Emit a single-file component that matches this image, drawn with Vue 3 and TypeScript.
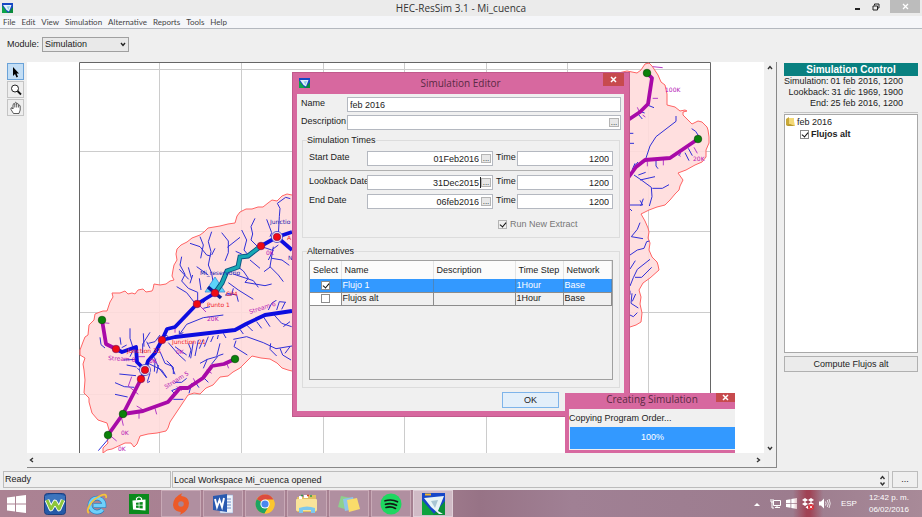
<script setup lang="ts">
import { ref } from 'vue'

interface Alternative {
  name: string
  selected: boolean
  step: string
  network: string
}
interface Label {
  x: number
  y: number
  text: string
  kind: string
  turn?: number
}

const menus = ['File', 'Edit', 'View', 'Simulation', 'Alternative', 'Reports', 'Tools', 'Help']
const moduleName = ref('Simulation')
const name = ref('feb 2016')
const description = ref('')
const times = ref([
  { label: 'Start Date', date: '01Feb2016', time: '1200' },
  { label: 'Lookback Date', date: '31Dec2015', time: '1200' },
  { label: 'End Date', date: '06feb2016', time: '1200' },
])
const alternatives = ref<Alternative[]>([
  { name: 'Flujo 1', selected: true, step: '1Hour', network: 'Base' },
  { name: 'Flujos alt', selected: false, step: '1Hour', network: 'Base' },
])
const treeChecked = ref(true)

const gridX = [159, 241, 323, 404, 486, 567, 648]
const gridY = [69, 151, 231, 312, 394]

const basin =
  'M292 195L287 194L282 196L277 201L272 200L268 203L263 207L258 207L252 209L246 209L240 212L237 216L235 223L228 224L220 226L208 228L204 232L200 235L192 238L187 242L181 245L177 249L176 254L177 260L174 265L173 270L172 276L174 280L170 281L166 284L160 285L154 284L153 289L152 291L146 292L143 289L138 290L135 294L132 293L128 294L125 291L120 293L112 293L113 297L110 302L107 311L103 311L100 312L95 314L94 320L89 325L88 335L85 337L83 342L80 350L80 355L85 358L83 364L84 370L85 380L84 393L89 398L89 402L92 413L98 420L107 423L110 433L107 438L108 443L103 448L103 453L107 450L112 449L125 443L131 443L134 447L137 444L140 436L148 434L157 433L166 431L168 428L170 422L176 413L188 395L194 393L200 394L206 388L213 385L220 377L228 376L233 372L240 368L252 356L261 358L270 359L277 363L282 368L288 370L292 371L400 395L560 380L630 327L636 325L641 322L642 313L640 304L641 297L639 290L643 283L650 278L659 270L658 265L657 262L652 257L649 250L650 243L648 238L649 232L648 228L645 221L641 214L649 210L657 207L665 205L670 200L675 194L679 190L680 186L683 180L678 173L686 170L695 165L702 162L706 157L706 150L709 143L709 137L708 130L707 127L702 122L698 121L692 124L687 119L683 115L683 112L687 111L685 110L680 111L675 107L667 105L667 94L665 85L661 82L658 75L652 66L649 63L645 64L641 70L637 73L627 71L500 100L400 180Z'

const mainRivers = [
  'M292 232L277 237L261 246',
  'M277 237L292 250',
  'M215 293L197 304L175 327L167 329L162 340L155 353L148 361L145 370L141 379',
  'M162 340L175 337L235 330L246 324L265 315L292 311',
  'M116 349L122 352L136 347L137 362L145 370',
]
const greatRivers = [
  'M102 320L106 344L116 349',
  'M141 379L123 414L108 435',
  'M123 414L143 411L168 402L180 388L188 388L203 378L212 366L224 364L235 359',
  'M647 73L652 78L648 104L640 112L628 120',
  'M698 139L670 158L645 160L636 167L628 178',
]
const reservoir = 'M261 246L248 256L240 257L238 267L227 271L222 283L215 293'

const upperStreams =
  'M455 155l-10 30 8 30-8 40 10 25 5 30M485 158l20 25 0 35-10 25M540 172l-38 30M390 190l30 10 20 25 12 3M420 170l10 25-8 40M545 150l15 30-8 30 10 12M585 115l-12 25 5 22-5 18 20 20M620 118l15 40-5 12M655 165l3-55 2-25-8-15 25-18 14 4M365 230l-5 25 15 28-10 20 20 22 28 12 0 30M385 262l10 35M358 268l28 30M350 320l30 18 22 28M410 260l35 25M530 258l20 15 15 22-10 12 60 10 20-5M570 240l30 25M505 308l30 22 45 28M520 325l-5 20-20 0M640 200l-10 60 25 25 15 20M636 235l30 5 22 16M632 260l-20 15M605 200l30 10 20-15M520 282l60 20 15 20M418 295l5 35M398 285l-8 25M640 210l-15 30M545 222l-18-8M465 205l-10 20M500 340l30 5 5 20M428 370l12-12M430 385l20-5'
const lowerStreams =
  'M490 45l-60 8-50 20-20 28M358 92l0 10 12-4M120 112l3 22 12 10M210 85l0 30 8 25M180 112l3 22M250 100l2 40M270 97l-22 35 0 28M178 222l50 5M165 248l28 12 30 2M165 283l38 8M115 452l30-35M265 190l40 20 15 22M283 172l12 30 25 32M300 155l15 35 20 8 10 25M325 128l30 35 22 20M345 140l35 25M385 130l8 20-6 22M400 125l-8 50M415 120l-10 48M430 118l-12 28M445 110l-12 30M460 108l-8 18M475 105l-3 12M490 100l8 14M520 118l40-8 50 18 38 18 48-8M528 122l-6 18 40 25M420 190l22-12 28-8 10-40M430 205l12-28M455 192l20-25 15-5M540 88l10 14M560 75l18 18M590 65l15 20M610 50l20 30M640 42l25 28 30 10M625 30l10-20 15-10M650 30l8-25 20 2M665 28l10-20M632 130l-2 18 20 20M660 145l8 20 25 15M690 140l-15 20M690 65l-20 15M380 235l-15 12-20 0M395 250l-8 30M405 245l12 18M430 232l15 15M340 298h30M360 262l-25 10 10 10M200 135l-15 8M220 150l-10 20M190 180l40-2M200 195l30 6M232 205l15 12M262 245l8-25M262 248l8-4M265 130l20-5 15-20M270 145l-10-20M310 100l15 10M320 182l20 20 0 20M285 185l-2 30M295 195l-5 25'
const eastStreams =
  'M168 168v16l-60 46-18 28-12 36M215 206l12 8 10 16M108 303v15l6 8M195 278l12 24M205 265l12 22M182 280l-6 8M42 345l22 15 30 22 2 28-8 28M60 360l45-10M97 385h30l20-11M55 345l22-8M30 435h38l-8-14M62 438l8-22M28 445l8 8M30 220h10M30 250h12M82 135l20 8M55 163l12 14M62 155l12 4M45 310l-8 18M44 318l10-12M60 488l-8 20-18 22 35 6M30 585l22-15 20-5 8-20 8-2M30 627l16-25M90 598l-38 30-12 25-10 25M45 652h20l30-30M30 692v12M36 700l-3 30 22 14M47 702l-10 22M30 765l10 5 12-12'
const sideGauges =
  'M98 20l30 3M98 115h16M60 160l-8-18M68 165l8 6M82 305v14M130 300v16M175 280l6 10M222 262l10 18'
const leftGauges =
  'M128 68l20 2M215 230l-10 28 30 25M237 338v18M285 325l5 18M185 355l5 22M152 408l18 15M350 260l15 12M400 235l10 20M345 80v18M420 18l18 18M250 330l-20-12M270 170l20 20M440 210l15 10M500 190l6 15M235 170h20'

const labels: Label[] = [
  { x: 270, y: 224, text: 'Junctio', kind: 'navy' },
  { x: 200, y: 275, text: 'Mi_reservorio', kind: 'navy' },
  { x: 226, y: 296, text: 'CP4', kind: 'red' },
  { x: 207, y: 307, text: 'Punto 1', kind: 'red' },
  { x: 207, y: 321, text: '20K', kind: 'violet' },
  { x: 172, y: 344, text: 'Junction 21', kind: 'red' },
  { x: 176, y: 354, text: '0K', kind: 'violet' },
  { x: 127, y: 353, text: 'Junction 33', kind: 'red' },
  { x: 108, y: 360, text: 'Stream 8', kind: 'violet', turn: 4 },
  { x: 250, y: 314, text: 'Stream 6', kind: 'violet', turn: -18 },
  { x: 166, y: 389, text: 'Stream 5', kind: 'violet', turn: -32 },
  { x: 121, y: 435, text: '0K', kind: 'violet' },
  { x: 118, y: 451, text: '0K', kind: 'violet' },
  { x: 149, y: 363, text: '0K', kind: 'violet' },
  { x: 266, y: 255, text: '0K', kind: 'violet' },
  { x: 287, y: 240, text: 'A', kind: 'red' },
  { x: 288, y: 260, text: 'N', kind: 'navy' },
  { x: 665, y: 92, text: '100K', kind: 'violet' },
  { x: 693, y: 161, text: '20K', kind: 'violet' },
]
const greenNodes = [[102, 320], [235, 359], [123, 414], [108, 435], [647, 73], [698, 139]]
const redNodes = [[277, 237], [261, 246], [215, 293], [197, 304], [162, 340], [116, 349], [145, 370], [141, 379]]
const rings = [[277, 237], [145, 370]]
</script>

<template>
  <div class="app">
    <header class="titlebar">
      <svg class="logo" viewBox="0 0 22 20"><rect width="22" height="20" fill="#1447c4" /><path d="M0 5L12 20H0z" fill="#0da54a" /><path d="M12 20L22 8v12z" fill="#0a8a3c" /><path d="M2 4h17l-5 13-5-3z" fill="#e4f3f7" /><path d="M9 7l7-1-3 8z" fill="#8fd0e8" /></svg>
      <h1>HEC-ResSim 3.1 - Mi_cuenca</h1>
      <div class="window-buttons">
        <button aria-label="Minimize"><svg width="8" height="8" viewBox="0 0 8 8"><path d="M1 6h5" stroke="#222" stroke-width="2" /></svg></button>
        <button aria-label="Restore"><svg width="8" height="8" viewBox="0 0 8 8"><path d="M2.500 2.500v-1.500h4.500v4h-1.500M1 3h4.500v4H1z" fill="none" stroke="#222" stroke-width="1" /></svg></button>
        <button class="grey-close" aria-label="Close"><svg width="7" height="7" viewBox="0 0 7 7"><path d="M1 1l5 5M6 1L1 6" stroke="#fff" stroke-width="1.300" /></svg></button>
      </div>
    </header>

    <nav class="menubar">
      <button v-for="m in menus" :key="m">{{ m }}</button>
    </nav>

    <div class="toolbar">
      <label for="module">Module:</label>
      <span class="select-wrap">
        <select id="module" v-model="moduleName"><option>Simulation</option></select>
        <svg width="6" height="5" viewBox="0 0 6 5"><path d="M1 1l2 2.500L5 1" fill="none" stroke="#222" stroke-width="1.400" /></svg>
      </span>
    </div>

    <main class="work">
      <aside class="tools">
        <button class="active" aria-label="Select"><svg width="14" height="14" viewBox="0 0 14 14"><path d="M4 2v9l2-2 1.500 3.500 1.500-.7L7.600 8.500H10z" fill="#000" /></svg></button>
        <button aria-label="Zoom"><svg width="14" height="14" viewBox="0 0 14 14"><circle cx="6" cy="5.500" r="3.500" fill="#fff" stroke="#222" stroke-width="1" /><path d="M8.500 8L12 11.500" stroke="#111" stroke-width="1.800" /></svg></button>
        <button aria-label="Pan"><svg width="14" height="14" viewBox="0 0 14 14"><path d="M4.500 12.500L2 8.500V7l1.200-.2L4 8V3.500l1-.8.8.8V2l1-.8.9.8v1.200l1-.7.9.8v1.200l1-.3.6.8v4L10 12.500zM5.800 3.500V6.500M7.700 3V6.500M9.600 4.500v2" fill="#fff" stroke="#333" stroke-width=".8" /></svg></button>
      </aside>

      <section class="map-pane">
        <svg class="map" viewBox="27 62 737 392" preserveAspectRatio="xMinYMin slice">
          <path d="M79.500 460V62.500H710.500V460" fill="#fff" stroke="#666" />
          <g stroke="#ccc">
            <path v-for="x in gridX" :key="x" :d="`M${x}.5 63V460`" />
            <path v-for="y in gridY" :key="y" :d="`M80 ${y}.5H710`" />
          </g>
          <path :d="basin" fill="#ffdcdc" fill-opacity=".9" stroke="#ff6464" stroke-width="1" />
          <g class="streams">
            <svg x="60" y="180" width="240" height="140" viewBox="0 0 720 420"><path :d="upperStreams" /></svg>
            <svg x="60" y="300" width="240" height="160" viewBox="0 0 720 480">
              <path :d="lowerStreams" />
              <path :d="leftGauges" class="gauge" />
            </svg>
            <svg x="620" y="60" width="100" height="280" viewBox="0 0 300 840">
              <path :d="eastStreams" />
              <path :d="sideGauges" class="gauge" />
            </svg>
          </g>
          <g fill="none" stroke-width="3.800" stroke-linejoin="round">
            <path v-for="d in greatRivers" :key="d" :d="d" stroke="#a80aa8" />
            <path v-for="d in mainRivers" :key="d" :d="d" stroke="#0d0de0" />
          </g>
          <path d="M215 277L205 292H225z" fill="#5cd4fa" stroke="#3a8ad8" stroke-width=".8" />
          <path d="M208 287L221 298" stroke="#0a1a9a" stroke-width="3.600" />
          <path :d="reservoir" fill="none" stroke="#0a5080" stroke-width="5" />
          <path :d="reservoir" fill="none" stroke="#18a8b4" stroke-width="3.200" />
          <text
            v-for="(l, i) in labels"
            :key="i"
            :x="l.x"
            :y="l.y"
            :class="l.kind"
            :transform="l.turn ? `rotate(${l.turn} ${l.x} ${l.y})` : undefined"
          >{{ l.text }}</text>
          <circle v-for="n in rings" :key="'r' + n[0]" :cx="n[0]" :cy="n[1]" r="5.500" fill="#fff" stroke="#3030c0" stroke-width=".8" />
          <circle v-for="n in redNodes" :key="'d' + n[0]" :cx="n[0]" :cy="n[1]" r="3.800" fill="#f00a14" stroke="#6a1060" stroke-width=".6" />
          <circle v-for="n in greenNodes" :key="'g' + n[0]" :cx="n[0]" :cy="n[1]" r="3.800" fill="#0a820a" stroke="#064006" stroke-width=".6" />
        </svg>
        <div class="vscroll">
          <button aria-label="Scroll up"><svg width="6" height="5" viewBox="0 0 6 5"><path d="M1 4l2-2.500L5 4" /></svg></button>
          <button aria-label="Scroll down"><svg width="6" height="5" viewBox="0 0 6 5"><path d="M1 1l2 2.500L5 1" /></svg></button>
        </div>
        <div class="hscroll">
          <button aria-label="Scroll left"><svg width="5" height="6" viewBox="0 0 5 6"><path d="M4 1L1.500 3 4 5" /></svg></button>
          <button aria-label="Scroll right"><svg width="5" height="6" viewBox="0 0 5 6"><path d="M1 1l2.500 2L1 5" /></svg></button>
        </div>
      </section>

      <aside class="control">
        <h2>Simulation Control</h2>
        <dl>
          <div><dt>Simulation:</dt><dd>01 feb 2016, 1200</dd></div>
          <div><dt>Lookback:</dt><dd>31 dic 1969, 1900</dd></div>
          <div><dt>End:</dt><dd>25 feb 2016, 1200</dd></div>
        </dl>
        <div class="tree">
          <div class="tree-root">
            <svg width="9" height="10" viewBox="0 0 9 10"><path d="M0 2l3-2v9l-3-1z" fill="#c9a93a" /><path d="M3 1h5v3l1 5H3z" fill="#f3d977" /><path d="M0 8l4-1 5 2H2z" fill="#b9982c" /></svg>
            feb 2016
          </div>
          <label class="tree-leaf"><input v-model="treeChecked" type="checkbox" class="tick" />Flujos alt</label>
        </div>
        <button class="compute">Compute Flujos alt</button>
      </aside>
    </main>

    <footer class="status">
      <div class="ready">Ready</div>
      <div class="message">
        Local Workspace Mi_cuenca opened
        <svg width="7" height="13" viewBox="0 0 7 13"><path d="M1.500 5l2-2.500 2 2.500M1.500 8.500l2 2.500 2-2.500" /></svg>
      </div>
      <button>...</button>
    </footer>

    <div class="taskbar">
      <button class="start" aria-label="Start"><svg width="19" height="18" viewBox="0 0 19 18"><path d="M0 2.500L8 1.500V8.500H0zM9 1.300L19 0V8.500H9zM0 9.500H8V16.500L0 15.500zM9 9.500H19V18L9 16.700z" fill="#fff" /></svg></button>
      <button aria-label="WinHTTrack"><svg width="22" height="22" viewBox="0 0 22 22"><rect x=".5" y=".5" width="21" height="21" rx="3" fill="#245aa8" stroke="#1b3f80" /><path d="M1 3q10-4 20 0v6q-10 4-20 0z" fill="#4c86cc" opacity=".6" /><path d="M3 7l4 9 4-7 4 7 4-9" fill="none" stroke="#fff" stroke-width="4.600" stroke-linejoin="round" /><path d="M3 7l4 9 4-7 4 7 4-9" fill="none" stroke="#8cc63c" stroke-width="3" stroke-linejoin="round" /></svg></button>
      <button aria-label="Internet Explorer"><svg width="22" height="22" viewBox="0 0 22 22"><path d="M7.500 12.500H18A7 7 0 1 0 16.500 16.500" fill="none" stroke="#1d7fc4" stroke-width="4.600" /><path d="M7.500 12.500H18A7 7 0 1 0 16.500 16.500" fill="none" stroke="#6fd0fa" stroke-width="3.400" /><path d="M3 20c-4-2 2-13 11-17 4-2 7-2 6 2" fill="none" stroke="#f5c33a" stroke-width="1.800" /></svg></button>
      <button aria-label="Store"><svg width="20" height="20" viewBox="0 0 20 20"><rect width="20" height="20" fill="#0a8a1c" /><path d="M3.500 6.500L16.500 5.500V16.500L4 15.500z" fill="#fff" /><path d="M7.500 6.500V4.500q2.500-3 5 0v2" fill="none" stroke="#fff" stroke-width="1.200" /><path d="M7 8.700l2.700-.3v2.400H7zM10.400 8.300l3.300-.4v2.900h-3.300zM7 11.500h2.700v2.600L7 13.800zM10.400 11.500h3.300v3l-3.300-.3z" fill="#0a8a1c" /></svg></button>
      <button class="open" aria-label="Origin"><svg width="18" height="22" viewBox="0 0 18 22"><path d="M10.500 0Q9 1.500 9.300 3Q16.500 3.500 17 10Q17 18 7.500 22Q9 20.500 8.700 19Q1.500 18.500 1 12Q1 4 10.500 0z" fill="#ed5a28" /><circle cx="9" cy="11" r="2.800" fill="#a88494" /></svg></button>
      <button class="open" aria-label="Word"><svg width="20" height="20" viewBox="0 0 20 20"><rect x="7" y="1" width="13" height="18" fill="#eef3fb" stroke="#8aa8d8" stroke-width=".6" /><path d="M13 5h5M13 8h5M13 11h5M12 14h6" stroke="#6a8cc8" /><path d="M0 2l14-2v18L0 16z" fill="#2a5ab0" /><path d="M2 5l2 8 2.500-7L9 13l2-9" fill="none" stroke="#fff" stroke-width="1.900" /></svg></button>
      <button class="open" aria-label="Chrome"><svg width="20" height="20" viewBox="0 0 20 20"><circle cx="10" cy="10" r="9.500" fill="#fbc62f" /><path d="M10 10L1.800 5.200A9.500 9.500 0 0 1 18.500 5.500H10z" fill="#dd4b3e" /><path d="M10 10L1.800 5.200A9.500 9.500 0 0 0 9.500 19.500L14 12z" fill="#1ea362" /><path d="M10 10L18.500 5.500A9.500 9.500 0 0 1 9.500 19.500L13.500 13z" fill="#fbc62f" /><circle cx="10" cy="10" r="4.600" fill="#fff" /><circle cx="10" cy="10" r="3.600" fill="#4a87ee" /></svg></button>
      <button class="open" aria-label="File Explorer"><svg width="22" height="20" viewBox="0 0 22 20"><path d="M1 3h7l2-2h10v17H1z" fill="#e2c063" /><path d="M3 2h3v3H3zM8 1h4v3H8z" fill="#fff" /><path d="M5 1.500h2M14 2h2" stroke="#2a9a4a" stroke-width="1.500" /><path d="M11 1.500h2" stroke="#d8402a" stroke-width="1.500" /><rect y="5" width="21" height="12" rx="1" fill="#f9e39a" /><path d="M3 19v-5q8-3 16 0v5h-4v-3H7v3z" fill="#7cc8ee" /></svg></button>
      <button class="open" aria-label="Sticky Notes"><svg width="22" height="18" viewBox="0 0 22 18"><path d="M3 1l10 2-3 12L0 12z" fill="#8ed08c" /><path d="M5 4l10-2 2 12-10 2z" fill="#8fc4e8" /><path d="M9 5l10-2 3 11-11 3z" fill="#f9dc6a" /></svg></button>
      <button class="open" aria-label="Spotify"><svg width="22" height="22" viewBox="0 0 22 22"><circle cx="11" cy="11" r="10.500" fill="#1ed760" /><path d="M5 7.800q7-2 12.500 1M5.500 11.300q6-1.800 11 1M6 14.500q5-1.500 9.500.9" fill="none" stroke="#101c14" stroke-width="1.700" stroke-linecap="round" /></svg></button>
      <button class="open current" aria-label="HEC-ResSim"><svg width="23" height="22" viewBox="0 0 23 22"><rect width="23" height="22" fill="#1746c8" /><path d="M0 7L13 22H0z" fill="#0da23e" /><path d="M11 22L23 8v14z" fill="#0a8f38" /><path d="M2 5L22 3 16 18l5 3h-4l-8-7z" fill="#e9f4f6" /><path d="M9 8l7-1-3 8z" fill="#a9c5d2" /><path d="M3 1.500h6" stroke="#f4b52a" stroke-width="2" /></svg></button>

      <div class="tray">
        <svg width="6" height="4" viewBox="0 0 6 4"><path d="M0 4l3-3 3 3z" fill="#fff" /></svg>
        <svg width="11" height="11" viewBox="0 0 11 11"><path d="M3.500 2.500h7v5h-7zM5 9.500h5M7 7.500v2M1 1v3h2V1M2 4v6h2" fill="none" stroke="#fff" /></svg>
        <svg width="11" height="11" viewBox="0 0 11 11"><path d="M0 2l4.500-.8V5H0zM5.300 1L11 0v5H5.300zM0 5.800h4.500v4L0 9zM5.300 5.800H11V11l-5.700-1z" fill="#fff" /></svg>
        <span class="dropbox">
          <svg width="12" height="12" viewBox="0 0 12 12"><path d="M3 0l3 2-3 2-3-2zM9 0l3 2-3 2-3-2zM3 4l3 2-3 2-3-2zM9 4l3 2-3 2-3-2zM6 7.500l2.500 1.700L6 11 3.500 9.200z" fill="#fff" /><circle cx="9" cy="9" r="3" fill="#d8303a" /><path d="M7.800 7.800l2.400 2.400M10.200 7.800L7.800 10.200" stroke="#fff" stroke-width=".8" /></svg>
        </span>
        <svg width="12" height="11" viewBox="0 0 12 11"><path d="M0 3.500h2L5 .5v10l-3-3H0z" fill="#fff" /><path d="M6.500 3.500q1.200 2 0 4M8.300 2q2 3.500 0 7M10 1q2.500 4.500 0 9" fill="none" stroke="#fff" stroke-width=".8" /></svg>
        <span class="lang">ESP</span>
        <span class="clock">12:42 p. m.<br />06/02/2016</span>
      </div>
    </div>

    <section class="dialog editor" role="dialog" aria-label="Simulation Editor">
      <header>
        <svg class="logo" viewBox="0 0 22 20"><rect width="22" height="20" fill="#1447c4" /><path d="M0 5L12 20H0z" fill="#0da54a" /><path d="M12 20L22 8v12z" fill="#0a8a3c" /><path d="M2 4h17l-5 13-5-3z" fill="#e4f3f7" /><path d="M9 7l7-1-3 8z" fill="#8fd0e8" /></svg>
        <h2>Simulation Editor</h2>
        <button class="close" aria-label="Close"><svg width="7" height="7" viewBox="0 0 7 7"><path d="M1 1l5 5M6 1L1 6" stroke="#fff" stroke-width="1.500" /></svg></button>
      </header>
      <form class="client" @submit.prevent>
        <div class="field"><label for="name">Name</label><input id="name" v-model="name" /></div>
        <div class="field">
          <label for="desc">Description</label>
          <span class="with-button"><input id="desc" v-model="description" /><button type="button">...</button></span>
        </div>
        <fieldset class="times">
          <legend>Simulation Times</legend>
          <div v-for="(t, i) in times" :key="t.label" class="time-row" :class="{ first: i === 0 }">
            <label :for="'date' + i">{{ t.label }}</label>
            <span class="with-button"><input :id="'date' + i" v-model="t.date" /><i v-if="i === 1" class="caret" /><button type="button">...</button></span>
            <label :for="'time' + i">Time</label>
            <input :id="'time' + i" v-model="t.time" class="clock-input" />
          </div>
          <label class="extract"><input type="checkbox" class="tick" checked disabled />Run New Extract</label>
        </fieldset>
        <fieldset class="alts">
          <legend>Alternatives</legend>
          <div class="table-box">
            <table>
              <colgroup><col class="c1" /><col class="c2" /><col class="c3" /><col class="c4" /><col class="c5" /></colgroup>
              <thead><tr><th>Select</th><th>Name</th><th>Description</th><th>Time Step</th><th>Network</th></tr></thead>
              <tbody>
                <tr v-for="(a, i) in alternatives" :key="a.name" :class="{ chosen: i === 0 }">
                  <td><input v-model="a.selected" type="checkbox" class="tick" :aria-label="a.name" /></td>
                  <td>{{ a.name }}</td><td></td><td>{{ a.step }}</td><td>{{ a.network }}</td>
                </tr>
              </tbody>
            </table>
          </div>
        </fieldset>
        <div class="actions"><button class="ok">OK</button></div>
      </form>
    </section>

    <section class="dialog progress" role="dialog" aria-label="Creating Simulation">
      <header>
        <h2>Creating Simulation</h2>
        <button class="close" aria-label="Close"><svg width="7" height="7" viewBox="0 0 7 7"><path d="M1 1l5 5M6 1L1 6" stroke="#fff" stroke-width="1.500" /></svg></button>
      </header>
      <div class="client">
        <p>Copying Program Order...</p>
        <div class="bar" role="progressbar" aria-valuenow="100">100%</div>
      </div>
    </section>
  </div>
</template>

<style>
body {
  margin: 0;
}
</style>

<style scoped>
* {
  box-sizing: border-box;
}
.app {
  position: relative;
  display: flex;
  flex-direction: column;
  height: 100vh;
  overflow: hidden;
  background: #efefef;
  color: #222;
  font: 9px/11px "Liberation Sans", Arial, sans-serif;
}
button,
input,
select {
  margin: 0;
  padding: 0;
  border: 0;
  border-radius: 0;
  background: none;
  color: inherit;
  font: inherit;
}
button {
  display: flex;
  align-items: center;
  justify-content: center;
}
h1,
h2,
p,
dl,
dd {
  margin: 0;
  font-weight: normal;
}
svg {
  display: block;
  flex: none;
}
.titlebar {
  display: grid;
  grid-template-columns: 1fr auto 1fr;
  align-items: center;
  height: 16px;
  background: #ebebeb;
}
.logo {
  width: 11px;
  height: 10px;
  margin-left: 2px;
}
h1 {
  font: 10px/16px "Open Sans", sans-serif;
  color: #333;
}
.window-buttons {
  display: flex;
  justify-content: flex-end;
  align-self: start;
  gap: 10px;
  padding-right: 2px;
}
.window-buttons button {
  height: 13px;
}
.window-buttons .grey-close {
  width: 30px;
  background: #bcbcbc;
}
.menubar {
  display: flex;
  gap: 6px;
  height: 13px;
  padding-left: 3px;
  border-bottom: 1px solid #b4b8bf;
  background: #f5f6f9;
  color: #444;
  font: 8px/12px Lato, sans-serif;
}
.toolbar {
  display: flex;
  align-items: center;
  gap: 3px;
  height: 31px;
  padding-left: 7px;
}
.select-wrap {
  position: relative;
  display: flex;
}
.select-wrap select {
  width: 87px;
  height: 15px;
  padding-left: 2px;
  border: 1px solid #a0a0a0;
  background: #e9e9e9;
  appearance: none;
}
.select-wrap svg {
  position: absolute;
  right: 3px;
  top: 5px;
}
.work {
  display: flex;
  flex: 1;
  min-height: 0;
}
.tools {
  display: flex;
  flex-direction: column;
  align-items: flex-end;
  gap: 1px;
  width: 27px;
  padding: 3px 3px 0 0;
}
.tools button {
  width: 17px;
  height: 17px;
  border: 1px solid #c4c4c4;
  background: #eee;
}
.tools .active {
  border-color: #6aa2d8;
  background: #c3def5;
}
.map-pane {
  display: grid;
  flex: 1;
  grid-template: minmax(0, 1fr) 14px / minmax(0, 1fr) 12px;
  margin-top: 2px;
  border-right: 1px solid #888;
  border-bottom: 1px solid #888;
}
.map {
  width: 100%;
  height: 100%;
  background: #fff;
}
.map text {
  font: 6px "DejaVu Sans", sans-serif;
}
.navy {
  fill: #2020b0;
}
.red {
  fill: #f01e28;
}
.violet {
  fill: #b414b4;
}
.streams path {
  fill: none;
  stroke: #3030d8;
  stroke-width: 3px;
}
.streams .gauge {
  stroke: #b43cc8;
}
.vscroll,
.hscroll {
  display: flex;
  justify-content: space-between;
  background: #f0f0f0;
}
.vscroll {
  flex-direction: column;
  align-items: center;
  padding: 3px 0 2px;
}
.hscroll {
  padding: 0 3px 0 2px;
}
.vscroll path,
.hscroll path,
.message path {
  fill: none;
  stroke: #333;
  stroke-width: 1.4px;
}
.control {
  display: flex;
  flex-direction: column;
  width: 145px;
  padding: 3px 4px 0 7px;
}
.control h2 {
  background: #088080;
  color: #fff;
  font-weight: bold;
  font-size: 10px;
  line-height: 13px;
  text-align: center;
}
.control dl {
  display: grid;
  padding: 0 18px 3px 0;
  border-bottom: 1px solid #c4c4c4;
}
.control dl div {
  display: flex;
  justify-content: flex-end;
  gap: 2px;
  white-space: nowrap;
}
.tree {
  height: 239px;
  margin-top: 1px;
  padding: 1px;
  border: 1px solid #a8a8a8;
  background: #fff;
}
.tree-root,
.tree-leaf {
  display: flex;
  align-items: center;
  gap: 2px;
  height: 12px;
}
.tree-leaf {
  padding-left: 14px;
  font-weight: bold;
}
.compute {
  height: 16px;
  margin-top: 3px;
  border: 1px solid #b0b0b0;
  background: #ebebeb;
}
.tick {
  position: relative;
  flex: none;
  width: 9px;
  height: 9px;
  border: 1px solid #8c8c8c;
  background: #fff;
  appearance: none;
}
.tick:checked::after {
  position: absolute;
  left: 2px;
  top: 0;
  width: 3px;
  height: 5px;
  border: solid #111;
  border-width: 0 1px 1px 0;
  transform: rotate(40deg);
  content: "";
}
.tick:disabled {
  border-color: #b4b4b4;
  background: #f0f0f0;
}
.status {
  display: flex;
  gap: 1px;
  height: 22px;
  padding: 3px 4px 2px 3px;
}
.status > * {
  border: 1px solid #bcbcbc;
}
.ready {
  width: 168px;
  padding: 2px 1px;
}
.message {
  display: flex;
  flex: 1;
  align-items: center;
  justify-content: space-between;
  padding: 2px 2px 0 1px;
}
.status button {
  width: 26px;
  margin-left: 2px;
}
.taskbar {
  display: flex;
  align-items: stretch;
  gap: 2px;
  height: 27px;
  background: linear-gradient(90deg, #ab8293 0, #a58091 45%, #977386 52%, #a08094 62%, #9c7c8e 86%, #a88a98 100%);
  color: #fff;
}
.taskbar button {
  width: 40px;
}
.taskbar .start {
  width: 33px;
}
.taskbar .open {
  border: 1px solid #c8a9b6;
  background: #b08fa0;
}
.taskbar .current {
  background: #d0bbc6;
  border-color: #e0d0d8;
}
.tray {
  display: flex;
  flex: 1;
  align-items: center;
  justify-content: flex-end;
  gap: 5px;
  padding-right: 13px;
  font: 8px/12px "Liberation Sans", sans-serif;
}
.tray > svg:first-child {
  margin-right: 5px;
}
.dropbox {
  display: flex;
  align-items: center;
  align-self: stretch;
  margin: 0 -9px;
  padding: 0 9px;
  background: linear-gradient(90deg, transparent, #a04254 45%, #a04254 55%, transparent);
}
.lang {
  margin: 0 7px 0 5px;
}
.clock {
  text-align: center;
}
.dialog {
  position: absolute;
  background: #d7689f;
}
.dialog header {
  display: grid;
  grid-template-columns: 1fr auto 1fr;
  align-items: center;
}
.dialog h2 {
  font: 10px/14px "Open Sans", sans-serif;
  color: #5a2a44;
}
.close {
  align-self: start;
  justify-self: end;
  background: #c74a4e;
}
.dialog .client {
  background: #f0f0f0;
}
.editor {
  left: 292px;
  top: 72px;
  width: 338px;
  padding: 0 6px 6px 5px;
  box-shadow: inset 0 0 0 1px #c05a8c;
}
.editor header {
  height: 22px;
}
.editor .close {
  width: 21px;
  height: 13px;
  margin-top: 1px;
}
.editor .client {
  display: flex;
  flex-direction: column;
  padding: 3px 3px 3px 4px;
}
.editor input:not(.tick) {
  width: 100%;
  height: 15px;
  padding: 1px 2px 0;
  border: 1px solid #b4b8c0;
  background: #fff;
}
.field {
  display: grid;
  grid-template-columns: 46px 1fr;
  height: 18px;
}
.field label,
.time-row label {
  padding-top: 1px;
  white-space: nowrap;
}
.with-button {
  position: relative;
  display: block;
}
.with-button button {
  position: absolute;
  right: 2px;
  top: 3px;
  width: 10px;
  height: 9px;
  border: 1px solid #b4b4b4;
  background: #e8e8e8;
  font-size: 8px;
  line-height: 5px;
}
fieldset {
  min-width: 0;
  margin: 0 1px;
  padding: 0 6px;
  border: 1px solid #dcdcdc;
}
legend {
  padding: 0;
  margin-left: -2px;
}
.times {
  height: 103px;
  margin-top: 2px;
  padding-top: 5px;
}
.time-row {
  display: grid;
  grid-template-columns: 58px 126px 1fr 96px;
  height: 19px;
}
.time-row.first {
  height: 20px;
  margin-bottom: 4px;
  border-bottom: 1px solid #b0b0b0;
}
.time-row > label:nth-of-type(2) {
  padding-left: 3px;
}
.time-row input:not(.tick) {
  text-align: right;
}
.time-row .with-button input:not(.tick) {
  padding-right: 13px;
}
.time-row .clock-input:not(.tick) {
  padding-right: 3px;
}
.caret {
  position: absolute;
  right: 12px;
  top: 2px;
  width: 1px;
  height: 11px;
  background: #222;
}
.extract {
  display: flex;
  align-items: center;
  gap: 3px;
  height: 14px;
  margin-top: 4px;
  padding-left: 189px;
  color: #777;
}
.alts {
  height: 142px;
  margin-top: 8px;
}
.table-box {
  height: 120px;
  margin-top: 3px;
  border: 1px solid #a0a0a0;
}
table {
  width: 100%;
  border-collapse: collapse;
  table-layout: fixed;
}
.c1 {
  width: 31px;
}
.c2 {
  width: 92px;
}
.c3 {
  width: 82px;
}
.c4 {
  width: 48px;
}
th {
  height: 18px;
  padding: 0 3px;
  border-right: 1px solid #e4e4e4;
  background: #fbfbfb;
  font-weight: normal;
  text-align: left;
  white-space: nowrap;
}
td {
  height: 13px;
  padding: 0 1px;
  border-right: 1px solid #8c8c8c;
  border-bottom: 1px solid #8c8c8c;
}
td:first-child {
  background: #fff;
  line-height: 0;
  text-align: center;
}
.chosen td,
.chosen td:first-child {
  border-right-color: #4a86c0;
  background: #3399ff;
  color: #fff;
}
.actions {
  display: flex;
  justify-content: flex-end;
  margin-top: 4px;
  padding-right: 62px;
}
.ok {
  width: 57px;
  height: 16px;
  border: 1px solid #7eb4ea;
  background: #e3effa;
}
.progress {
  left: 565px;
  top: 393px;
  width: 170px;
  padding: 0 0 3px 4px;
}
.progress header {
  height: 16px;
}
.progress h2 {
  line-height: 12px;
  align-self: start;
  grid-column: 2;
}
.progress .close {
  grid-column: 3;
  width: 19px;
  height: 9px;
}
.progress .client {
  padding-bottom: 1px;
}
.progress p {
  height: 18px;
  line-height: 19px;
}
.progress .bar {
  height: 22px;
  margin-left: 1px;
  background: #3399ff;
  color: #fff;
  line-height: 20px;
  text-align: center;
}
</style>
